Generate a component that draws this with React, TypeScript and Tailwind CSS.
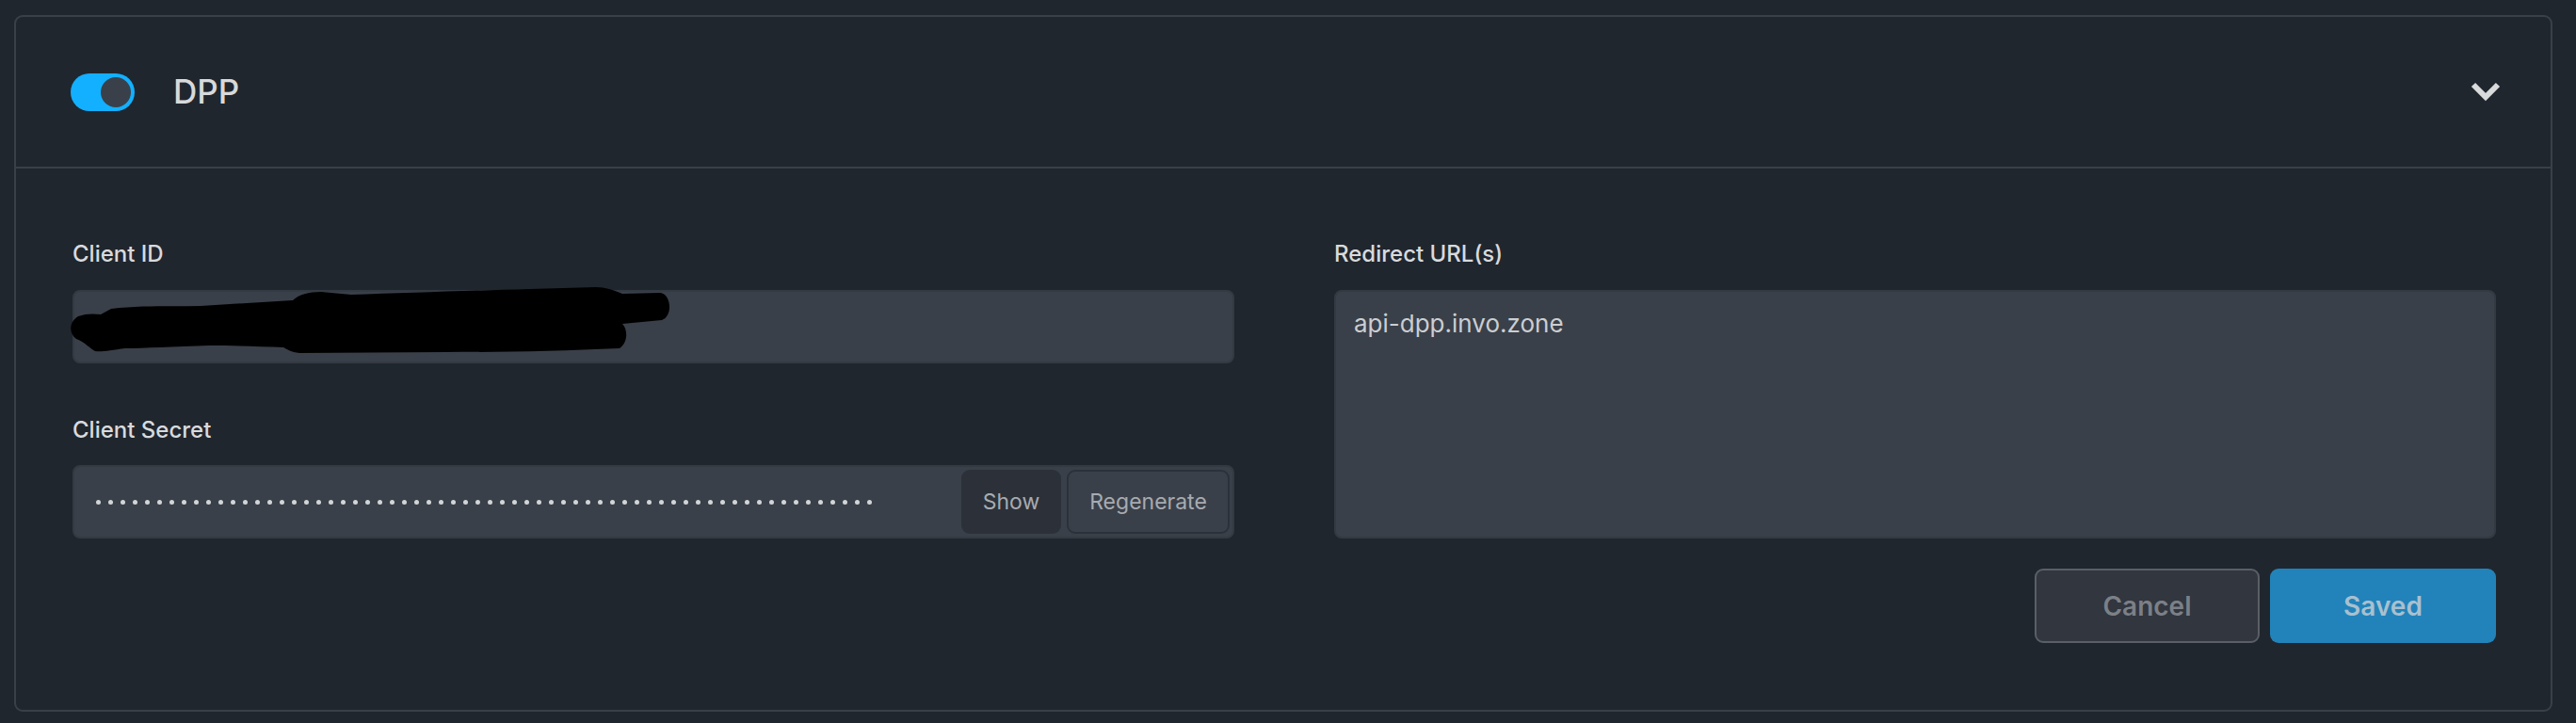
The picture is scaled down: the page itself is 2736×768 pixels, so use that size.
import React from "react";

function Chevron() {
  return (
    <svg width="32" height="22" viewBox="0 0 32 22" fill="none">
      <path d="M3 3 L16 16 L29 3" stroke="#d9dadb" strokeWidth="6" strokeLinecap="butt" strokeLinejoin="miter" />
    </svg>
  );
}

function Scribble() {
  return (
    <svg
      className="absolute left-[-6px] top-[-8px] pointer-events-none"
      width="650"
      height="82"
      viewBox="0 0 650 82"
      fill="none"
    >
      <path
        d="M10 34 C18 31 26 31 34 32 L45 26 C80 22 110 24 140 23 L238 17 C244 11 255 8 268 8 L300 11 C360 9 420 7 490 5 L560 3 C570 3 578 6 588 10 L628 9 C640 10 642 34 630 38 L588 42 C594 48 594 62 585 68 C520 71 460 72 400 72 L245 73 C236 72 232 69 228 67 C200 66 170 65 150 65 C110 66 80 68 60 68 C45 70 35 72 28 71 C22 68 18 62 8 58 C0 52 0 40 10 34 Z"
        fill="#000"
      />
    </svg>
  );
}

export default function App() {
  const dots = Array.from({ length: 64 });
  return (
    <div
      className="w-[2736px] h-[768px] bg-[#20262e] pl-[15px] pt-[16px] pr-[25px]"
      style={{ fontFamily: "Inter, 'Noto Sans', sans-serif" }}
    >
      <div className="w-[2696px] h-[740px] border-2 border-[#3a4048] rounded-[9px] bg-[#20262e] flex flex-col">
        {/* Header */}
        <div className="h-[161px] border-b-2 border-[#3a4048] flex items-center pl-[58px] pr-[53px]">
          <div className="w-[68px] h-[40px] rounded-full bg-[#12b0fe] flex items-center justify-end pr-[4px]">
            <div className="w-[32px] h-[32px] rounded-full bg-[#3a4049]" />
          </div>
          <div className="ml-[41px] text-[35px] font-medium text-[#d8d9da] leading-none">DPP</div>
          <div className="ml-auto flex items-center">
            <Chevron />
          </div>
        </div>

        {/* Body */}
        <div className="flex-1 pl-[60px] pr-[58px] pt-[75px] pb-[71px] flex flex-col">
          <div className="grid grid-cols-2 gap-x-[106px]">
            {/* Left column */}
            <div className="flex flex-col">
              <div className="text-[24px] leading-[32px] font-medium text-[#d8dadd]">Client ID</div>
              <div className="mt-[22px] relative h-[78px] rounded-[8px] bg-[#3a4049] border-2 border-[#343a42]">
                <Scribble />
              </div>
              <div className="mt-[55px] text-[24px] leading-[32px] font-medium text-[#d8dadd]">Client Secret</div>
              <div className="mt-[21px] h-[78px] rounded-[8px] bg-[#3a4049] border-2 border-[#343a42] flex items-center pl-[23px] pr-[3px]">
                <div className="flex items-center gap-[8px]">
                  {dots.map((_, i) => (
                    <span key={i} className="block w-[5px] h-[5px] rounded-full bg-[#d2d5d8]" />
                  ))}
                </div>
                <div className="ml-auto flex items-center gap-[6px]">
                  <button className="w-[106px] h-[68px] rounded-[9px] bg-[#2c3139] text-[23px] text-[#a7abb1] flex items-center justify-center">
                    Show
                  </button>
                  <button className="w-[173px] h-[68px] rounded-[9px] bg-[#3a4049] border-2 border-[#2c3139] text-[23px] text-[#a7abb1] flex items-center justify-center">
                    Regenerate
                  </button>
                </div>
              </div>
            </div>

            {/* Right column */}
            <div className="flex flex-col">
              <div className="text-[24px] leading-[32px] font-medium text-[#d8dadd]">Redirect URL(s)</div>
              <div className="mt-[22px] h-[264px] rounded-[8px] bg-[#3a4049] border-2 border-[#343a42] pl-[19px] pt-[18px]">
                <div className="text-[26px] leading-[32px] text-[#cbced2]">api-dpp.invo.zone</div>
              </div>
              <div className="mt-[32px] flex justify-end gap-[11px]">
                <button className="w-[239px] h-[79px] rounded-[9px] bg-[#31363f] border-2 border-[#5a5f66] text-[28px] font-semibold text-[#7c8087] flex items-center justify-center">
                  Cancel
                </button>
                <button className="w-[240px] h-[79px] rounded-[9px] bg-[#2283ba] text-[28px] font-semibold text-[#a9c0cf] flex items-center justify-center">
                  Saved
                </button>
              </div>
            </div>
          </div>
        </div>
      </div>
    </div>
  );
}
